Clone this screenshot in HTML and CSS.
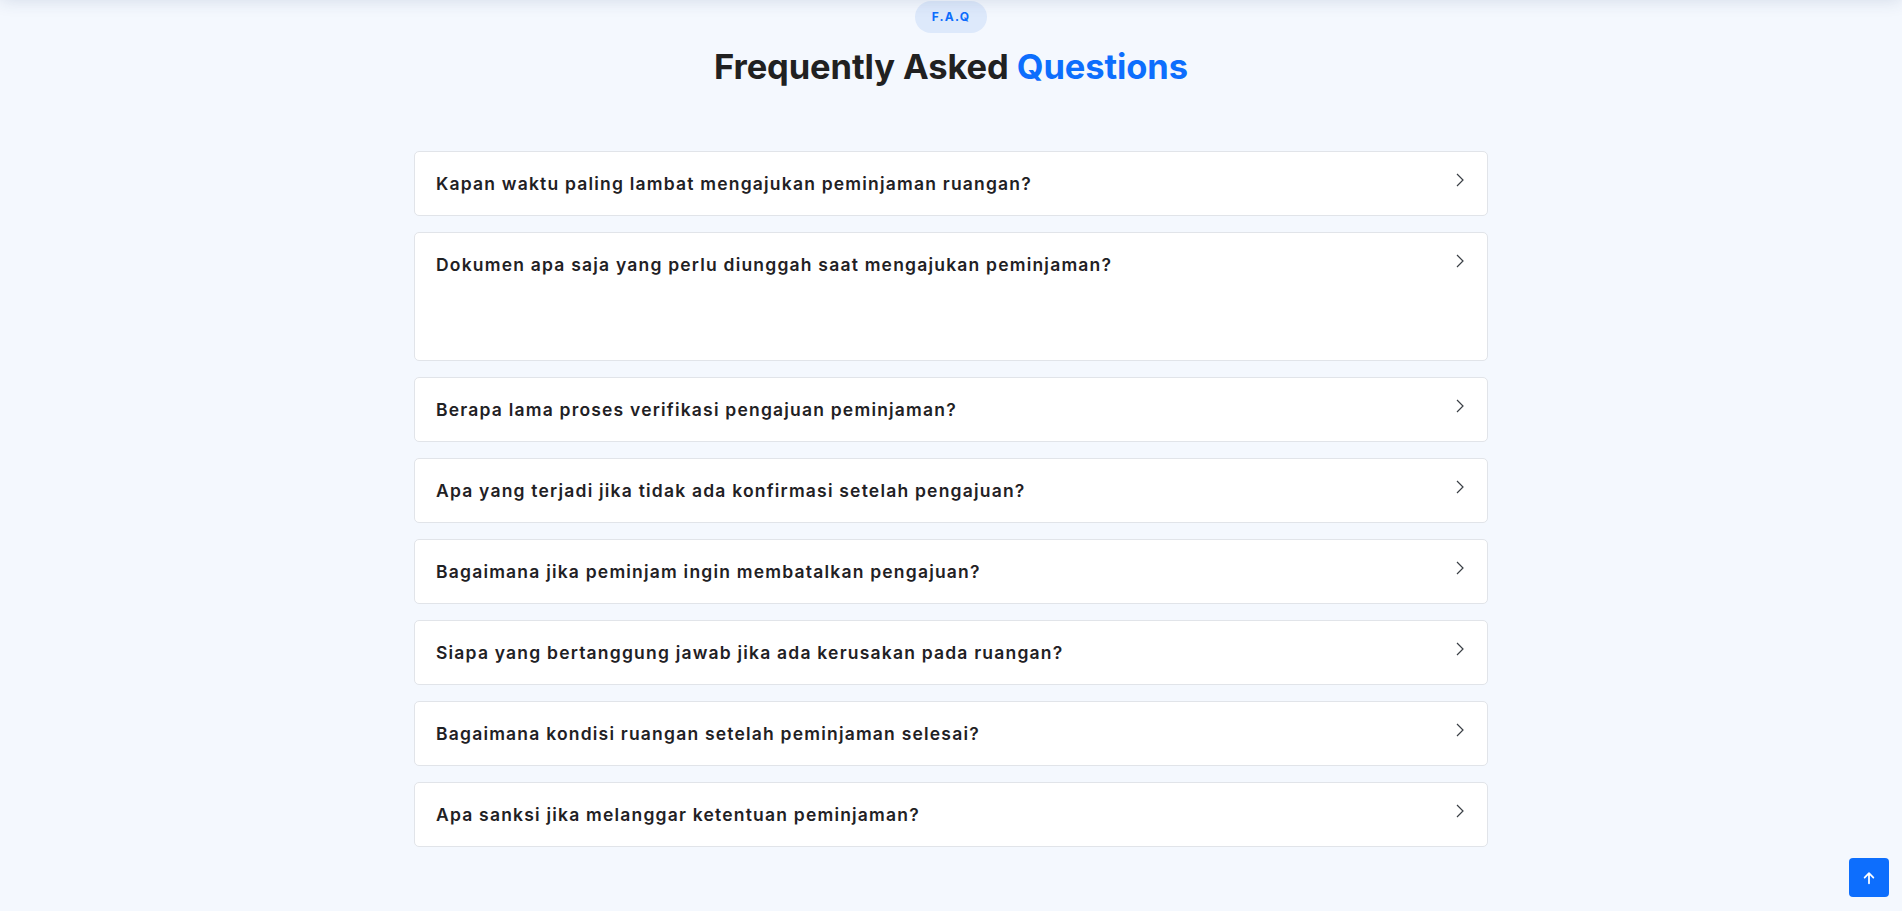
FILE: index.html
```html
<!DOCTYPE html>
<html lang="id">
<head>
<meta charset="utf-8">
<title>FAQ</title>
<link rel="stylesheet" href="styles.css">
</head>
<body>
<div class="top-shadow"></div>
<section class="faq">
  <div class="faq-head">
    <span class="badge">F.A.Q</span>
    <h2 class="title">Frequently Asked <span class="accent">Questions</span></h2>
  </div>
  <div class="faq-list">
    <div class="faq-item">
      <div class="faq-q"><span class="q-text">Kapan waktu paling lambat mengajukan peminjaman ruangan?</span><svg class="chev" viewBox="0 0 8 14" width="8" height="14"><path d="M1 1l6 6-6 6" fill="none" stroke="#3a3f45" stroke-width="1.2"/></svg></div>
    </div>
    <div class="faq-item">
      <div class="faq-q"><span class="q-text">Dokumen apa saja yang perlu diunggah saat mengajukan peminjaman?</span><svg class="chev" viewBox="0 0 8 14" width="8" height="14"><path d="M1 1l6 6-6 6" fill="none" stroke="#3a3f45" stroke-width="1.2"/></svg></div>
      <div class="faq-a"></div>
    </div>
    <div class="faq-item">
      <div class="faq-q"><span class="q-text">Berapa lama proses verifikasi pengajuan peminjaman?</span><svg class="chev" viewBox="0 0 8 14" width="8" height="14"><path d="M1 1l6 6-6 6" fill="none" stroke="#3a3f45" stroke-width="1.2"/></svg></div>
    </div>
    <div class="faq-item">
      <div class="faq-q"><span class="q-text">Apa yang terjadi jika tidak ada konfirmasi setelah pengajuan?</span><svg class="chev" viewBox="0 0 8 14" width="8" height="14"><path d="M1 1l6 6-6 6" fill="none" stroke="#3a3f45" stroke-width="1.2"/></svg></div>
    </div>
    <div class="faq-item">
      <div class="faq-q"><span class="q-text">Bagaimana jika peminjam ingin membatalkan pengajuan?</span><svg class="chev" viewBox="0 0 8 14" width="8" height="14"><path d="M1 1l6 6-6 6" fill="none" stroke="#3a3f45" stroke-width="1.2"/></svg></div>
    </div>
    <div class="faq-item">
      <div class="faq-q"><span class="q-text">Siapa yang bertanggung jawab jika ada kerusakan pada ruangan?</span><svg class="chev" viewBox="0 0 8 14" width="8" height="14"><path d="M1 1l6 6-6 6" fill="none" stroke="#3a3f45" stroke-width="1.2"/></svg></div>
    </div>
    <div class="faq-item">
      <div class="faq-q"><span class="q-text">Bagaimana kondisi ruangan setelah peminjaman selesai?</span><svg class="chev" viewBox="0 0 8 14" width="8" height="14"><path d="M1 1l6 6-6 6" fill="none" stroke="#3a3f45" stroke-width="1.2"/></svg></div>
    </div>
    <div class="faq-item">
      <div class="faq-q"><span class="q-text">Apa sanksi jika melanggar ketentuan peminjaman?</span><svg class="chev" viewBox="0 0 8 14" width="8" height="14"><path d="M1 1l6 6-6 6" fill="none" stroke="#3a3f45" stroke-width="1.2"/></svg></div>
    </div>
  </div>
</section>
<a class="to-top" href="#"><svg viewBox="0 0 16 16" width="14" height="14"><path d="M8 14V2.5M3 7.5L8 2.5l5 5" fill="none" stroke="#fff" stroke-width="2" stroke-linecap="round" stroke-linejoin="round"/></svg></a>
</body>
</html>
```
FILE: styles.css
```css
* { box-sizing: border-box; }
html, body { margin: 0; padding: 0; }
body {
  background: #f4f8fe;
  font-family: Inter, "Noto Sans", sans-serif;
  color: #212529;
  height: 911px;
  overflow: hidden;
}
.top-shadow {
  position: fixed;
  top: -40px;
  left: 0;
  right: 0;
  height: 40px;
  box-shadow: 0 0 18px rgba(40, 60, 110, 0.16);
  background: #fff;
}
.faq { padding-top: 1px; }
.faq-head {
  display: flex;
  flex-direction: column;
  align-items: center;
}
.badge {
  display: inline-block;
  height: 32px;
  line-height: 32px;
  padding: 0 17px;
  border-radius: 16px;
  background: #dde9fb;
  color: #0d6efd;
  font-size: 12px;
  font-weight: 700;
  letter-spacing: 1.2px;
}
.title {
  margin: 12px 0 0;
  font-size: 34.5px;
  line-height: 44px;
  font-weight: 700;
  color: #212121;
  letter-spacing: -0.1px;
}
.accent { color: #0d6efd; }
.faq-list {
  width: 1074px;
  margin: 62px auto 0;
  display: flex;
  flex-direction: column;
  gap: 16px;
}
.faq-item {
  background: #fff;
  border: 1px solid #e1e4e9;
  border-radius: 5px;
}
.faq-q {
  display: flex;
  justify-content: space-between;
  align-items: flex-start;
  padding: 20px 23px 20px 21px;
}
.q-text {
  font-size: 17.5px;
  line-height: 23px;
  font-weight: 600;
  color: #1f2124;
  letter-spacing: 1.2px;
}
.chev { margin-top: 1px; flex: none; }
.faq-a { height: 64px; }
.to-top {
  position: fixed;
  right: 13px;
  bottom: 14px;
  width: 40px;
  height: 39px;
  border-radius: 4px;
  background: #0d6efd;
  display: flex;
  align-items: center;
  justify-content: center;
}
```
